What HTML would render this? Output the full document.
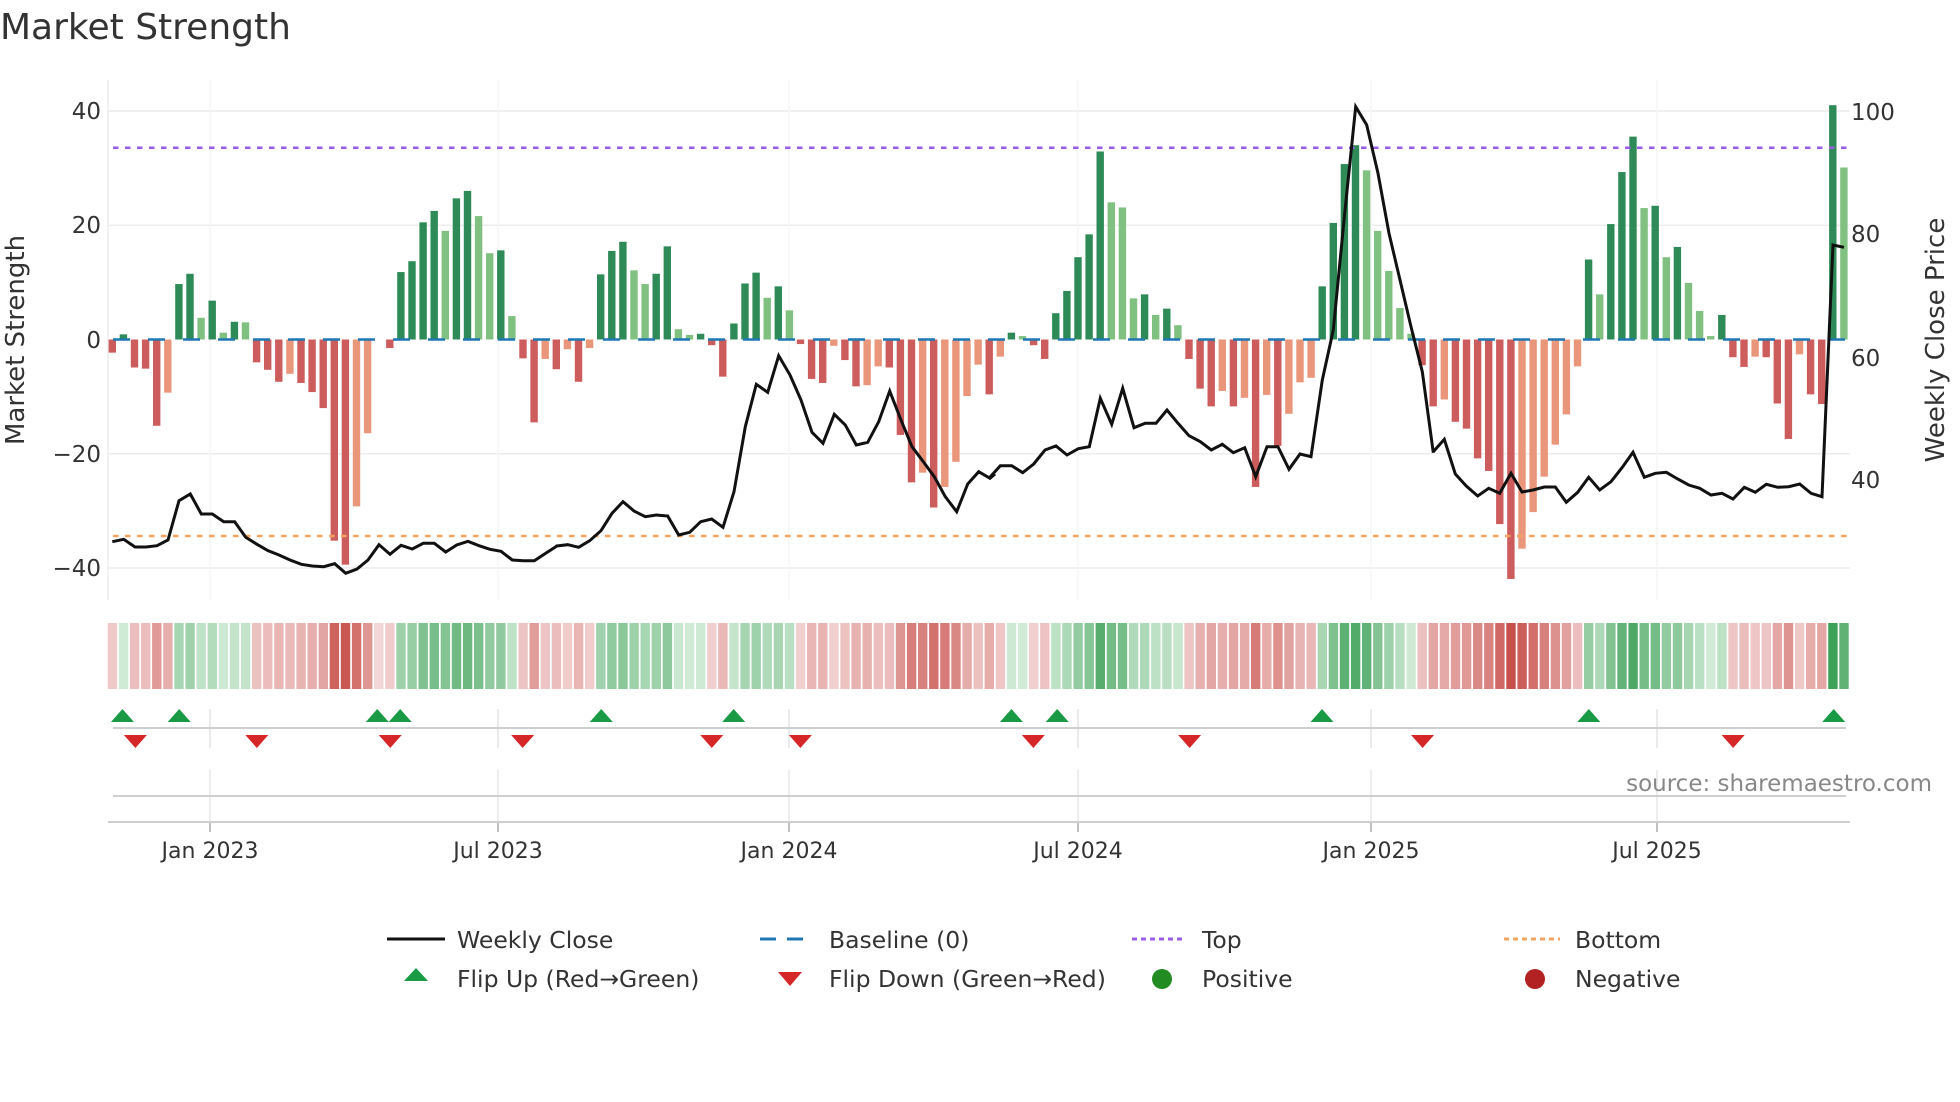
<!DOCTYPE html>
<html><head><meta charset="utf-8">
<style>
html,body{margin:0;padding:0;background:#fff;}
svg{display:block;font-family:"DejaVu Sans","Liberation Sans",sans-serif;}
</style></head>
<body>
<svg id="s" width="1960" height="1102" viewBox="0 0 1960 1102" xmlns="http://www.w3.org/2000/svg">
<text x="0" y="39" font-size="36" fill="#333">Market Strength</text>
<g id="grid"></g>
<g id="bars"></g>
<g id="lines"></g>
<g font-size="23" fill="#333" text-anchor="end">
<text x="101" y="119">40</text>
<text x="101" y="233">20</text>
<text x="101" y="348">0</text>
<text x="101" y="462">−20</text>
<text x="101" y="576">−40</text>
</g>
<g font-size="23" fill="#333">
<text x="1851" y="120">100</text>
<text x="1851" y="242">80</text>
<text x="1851" y="366">60</text>
<text x="1851" y="488">40</text>
</g>
<text transform="translate(24,340) rotate(-90)" font-size="26" fill="#333" text-anchor="middle">Market Strength</text>
<text transform="translate(1944,340) rotate(-90)" font-size="26" fill="#333" text-anchor="middle">Weekly Close Price</text>
<g id="strip"></g>
<g id="marks"></g>
<text x="1932" y="791" font-size="23" fill="#888" text-anchor="end">source: sharemaestro.com</text>
<g font-size="22" fill="#333" text-anchor="middle">
<text x="210" y="858">Jan 2023</text>
<text x="498" y="858">Jul 2023</text>
<text x="789" y="858">Jan 2024</text>
<text x="1078" y="858">Jul 2024</text>
<text x="1371" y="858">Jan 2025</text>
<text x="1657" y="858">Jul 2025</text>
</g>
<g font-size="23.5" fill="#333">
<line x1="387" y1="939" x2="445" y2="939" stroke="#111" stroke-width="3"/>
<text x="457" y="948">Weekly Close</text>
<line x1="760" y1="939" x2="814" y2="939" stroke="#1f77b4" stroke-width="3" stroke-dasharray="16,11"/>
<text x="829" y="948">Baseline (0)</text>
<line x1="1132" y1="939" x2="1186" y2="939" stroke="#9b5de5" stroke-width="3" stroke-dasharray="5,4"/>
<text x="1202" y="948">Top</text>
<line x1="1504" y1="939" x2="1560" y2="939" stroke="#f4a460" stroke-width="3" stroke-dasharray="5,4"/>
<text x="1575" y="948">Bottom</text>
<polygon points="416,968 428,981 404,981" fill="#1a9a45"/>
<text x="457" y="987">Flip Up (Red→Green)</text>
<polygon points="778,972 802,972 790,986" fill="#d62728"/>
<text x="829" y="987">Flip Down (Green→Red)</text>
<circle cx="1162" cy="979" r="10" fill="#228b22"/>
<text x="1202" y="987">Positive</text>
<circle cx="1535" cy="979" r="10" fill="#b22222"/>
<text x="1575" y="987">Negative</text>
</g>
</svg>
<script>
var NS="http://www.w3.org/2000/svg";
function el(p,t,a){var e=document.createElementNS(NS,t);for(var k in a)e.setAttribute(k,a[k]);p.appendChild(e);return e;}
var data="R-2.3 G0.9 R-4.9 R-5.1 R-15.1 r-9.3 G9.7 G11.5 g3.8 G6.8 g1.2 G3.1 g3.0 R-4.0 R-5.3 R-7.4 r-6.0 R-7.6 R-9.2 R-12.0 R-35.2 R-39.4 r-29.2 r-16.4 R0 R-1.5 G11.8 G13.7 G20.5 G22.5 g19.0 G24.7 G26.0 g21.6 g15.1 G15.6 g4.1 R-3.3 R-14.5 r-3.4 R-5.2 r-1.7 R-7.4 r-1.5 G11.4 G15.5 G17.1 g12.1 g9.7 G11.5 G16.3 g1.8 g0.8 G1.0 R-1.0 R-6.5 G2.8 G9.8 G11.7 g7.3 G9.3 g5.1 R-0.8 R-6.9 R-7.6 r-1.1 R-3.6 R-8.2 r-8.0 r-4.7 R-4.9 R-16.7 R-25.0 r-23.3 R-29.4 r-25.8 r-21.4 r-9.9 r-4.4 R-9.6 r-3.0 G1.2 g0.6 R-1.0 R-3.4 G4.6 G8.5 G14.4 G18.4 G32.9 g24.0 g23.1 g7.2 G7.9 g4.3 G5.4 g2.5 R-3.4 R-8.6 R-11.7 r-9.0 R-11.7 r-10.2 R-25.8 r-9.7 R-18.6 r-13.0 r-7.5 r-6.7 G9.3 G20.4 G30.7 G34.0 g29.6 g19.0 g12.0 g5.5 g1.0 R-4.5 R-11.7 r-10.5 R-14.4 R-15.6 R-20.8 R-23.0 R-32.3 R-41.9 r-36.6 r-30.2 r-24.0 r-18.4 r-13.1 r-4.7 G14.0 g7.9 G20.2 G29.3 G35.5 g23.0 G23.4 g14.4 G16.2 g9.9 g5.0 g0.6 G4.3 R-3.1 R-4.8 r-3.0 R-3.1 R-11.2 R-17.4 r-2.6 R-9.6 R-11.3 G41.0 g30.1".split(" ");
var col={G:"#2e8b57",g:"#80c080",R:"#cd5c5c",r:"#e9967a"};
var X0=112.3,P=11.1,Y0=339.5,U=5.715;
var grid=document.getElementById("grid"),bars=document.getElementById("bars"),lines=document.getElementById("lines"),strip=document.getElementById("strip"),marks=document.getElementById("marks");
[111,225.3,453.8,568].forEach(function(y){el(grid,"line",{x1:108,x2:1850,y1:y,y2:y,stroke:"#ececec","stroke-width":1.5});});
el(grid,"line",{x1:108,x2:108,y1:80,y2:600,stroke:"#eeeeee","stroke-width":1.5});
var months=[210,498,789,1078,1371,1657];
months.forEach(function(x){
 el(grid,"line",{x1:x,x2:x,y1:80,y2:600,stroke:"#f5f5f5","stroke-width":1.5});
 el(grid,"line",{x1:x,x2:x,y1:709,y2:748,stroke:"#e4e4e4","stroke-width":1.5});
 el(grid,"line",{x1:x,x2:x,y1:770,y2:822,stroke:"#e8e8e8","stroke-width":1.5});
 el(grid,"line",{x1:x,x2:x,y1:822,y2:832,stroke:"#aaa","stroke-width":1.5});
});
el(grid,"line",{x1:113,x2:1846,y1:728,y2:728,stroke:"#cfcfcf","stroke-width":2});
el(grid,"line",{x1:113,x2:1846,y1:796,y2:796,stroke:"#cfcfcf","stroke-width":2});
el(grid,"line",{x1:108,x2:1850,y1:822,y2:822,stroke:"#cfcfcf","stroke-width":2});
function mix(a,b,t){var r="#";for(var i=0;i<3;i++){var x=parseInt(a.substr(1+2*i,2),16),y=parseInt(b.substr(1+2*i,2),16);var v=Math.round(x+(y-x)*t);r+=(v<16?"0":"")+v.toString(16);}return r;}
data.forEach(function(s,i){
 var t=s[0],v=parseFloat(s.slice(1)),x=X0+i*P;
 var h=Math.abs(v)*U;
 if(h>0.5) el(bars,"rect",{x:x-3.7,y:v>0?Y0-h:Y0,width:7.4,height:h,fill:col[t]});
 var m=Math.min(1,Math.abs(v)/42);
 var c=v>0?mix("#d6eedb","#3b9f55",Math.pow(m,0.8)):mix("#f3d6d6","#c8504a",Math.pow(m,0.8));
 el(strip,"rect",{x:x-4.6,y:623,width:9.4,height:66,fill:c});
});
el(lines,"line",{x1:113,x2:1850,y1:Y0,y2:Y0,stroke:"#1f77b4","stroke-width":2.5,"stroke-dasharray":"17,18"});
el(lines,"line",{x1:113,x2:1850,y1:147.7,y2:147.7,stroke:"#9b5de5","stroke-width":2.5,"stroke-dasharray":"5.5,6.5"});
el(lines,"line",{x1:113,x2:1850,y1:536,y2:536,stroke:"#f4a460","stroke-width":2.5,"stroke-dasharray":"5.5,6.5"});
var segs=[[105,"22,1385 56,1378 90,1401 123,1401 156,1397 189,1380 222,1262 256,1242 289,1302 322,1302 356,1325 389,1325 422,1372 456,1393 489,1412 522,1425 555,1440 589,1453 622,1458 656,1460 689,1451 722,1480 756,1467 789,1440 822,1394 855,1423 888,1396 922,1407 955,1390 988,1390 1022,1416 1055,1395 1089,1384 1122,1397 1155,1408 1188,1414 1222,1440 1255,1442 1288,1442 1322,1420 1350,1402"],
[545,"35,1398 68,1394 101,1402 134,1382 168,1352 201,1300 234,1265 267,1293 301,1310 334,1305 368,1308 401,1365 434,1357 467,1325 500,1317 534,1342 567,1235 601,1040 634,913 668,937 701,827 735,885 768,960 801,1057 834,1090 868,1003 901,1035 934,1095 968,1087 1001,1025 1034,933 1068,1020 1101,1100 1135,1145 1168,1190 1201,1250 1235,1295 1268,1212 1301,1175 1335,1195 1350,1182"],
[985,"12,1195 46,1157 80,1157 113,1178 146,1152 180,1110 213,1098 246,1125 280,1106 313,1100 346,955 380,1033 413,925 447,1043 480,1030 513,1030 546,990 579,1030 612,1067 646,1085 679,1110 712,1093 745,1118 779,1103 812,1190 846,1100 879,1100 912,1168 945,1122 978,1130 1012,900 1045,750 1079,400 1112,80 1145,135 1179,280 1212,460 1245,600 1278,740 1312,875 1345,1118"],
[1425,"25,1115 58,1078 91,1182 124,1218 158,1248 191,1225 224,1240 258,1180 291,1236 324,1230 358,1221 391,1221 424,1267 458,1237 491,1192 524,1230 558,1205 591,1163 624,1117 658,1192 691,1180 724,1177 758,1197 791,1215 824,1225 858,1245 891,1240 924,1257 958,1222 991,1237 1024,1213 1058,1222 1091,1220 1124,1212 1158,1240 1191,1250 1224,495 1257,502"]];
var pts=[];
segs.forEach(function(s){s[1].split(" ").forEach(function(p){var a=p.split(",");pts.push((s[0]+a[0]/3).toFixed(1)+","+(80+a[1]/3).toFixed(1));});});
el(lines,"polyline",{points:pts.join(" "),fill:"none",stroke:"#111","stroke-width":3,"stroke-linejoin":"miter"});
[123,180,379,402,604,737,1016,1062,1328,1596,1842].forEach(function(x){x=x*0.9955;el(marks,"polygon",{points:(x)+",709 "+(x+11.5)+",722 "+(x-11.5)+",722",fill:"#1a9a45"});});
[136,258,392,525,715,804,1038,1195,1429,1741].forEach(function(x){x=x*0.9955;el(marks,"polygon",{points:(x-11.5)+",735 "+(x+11.5)+",735 "+x+",748",fill:"#d62728"});});
</script>
</body></html>
